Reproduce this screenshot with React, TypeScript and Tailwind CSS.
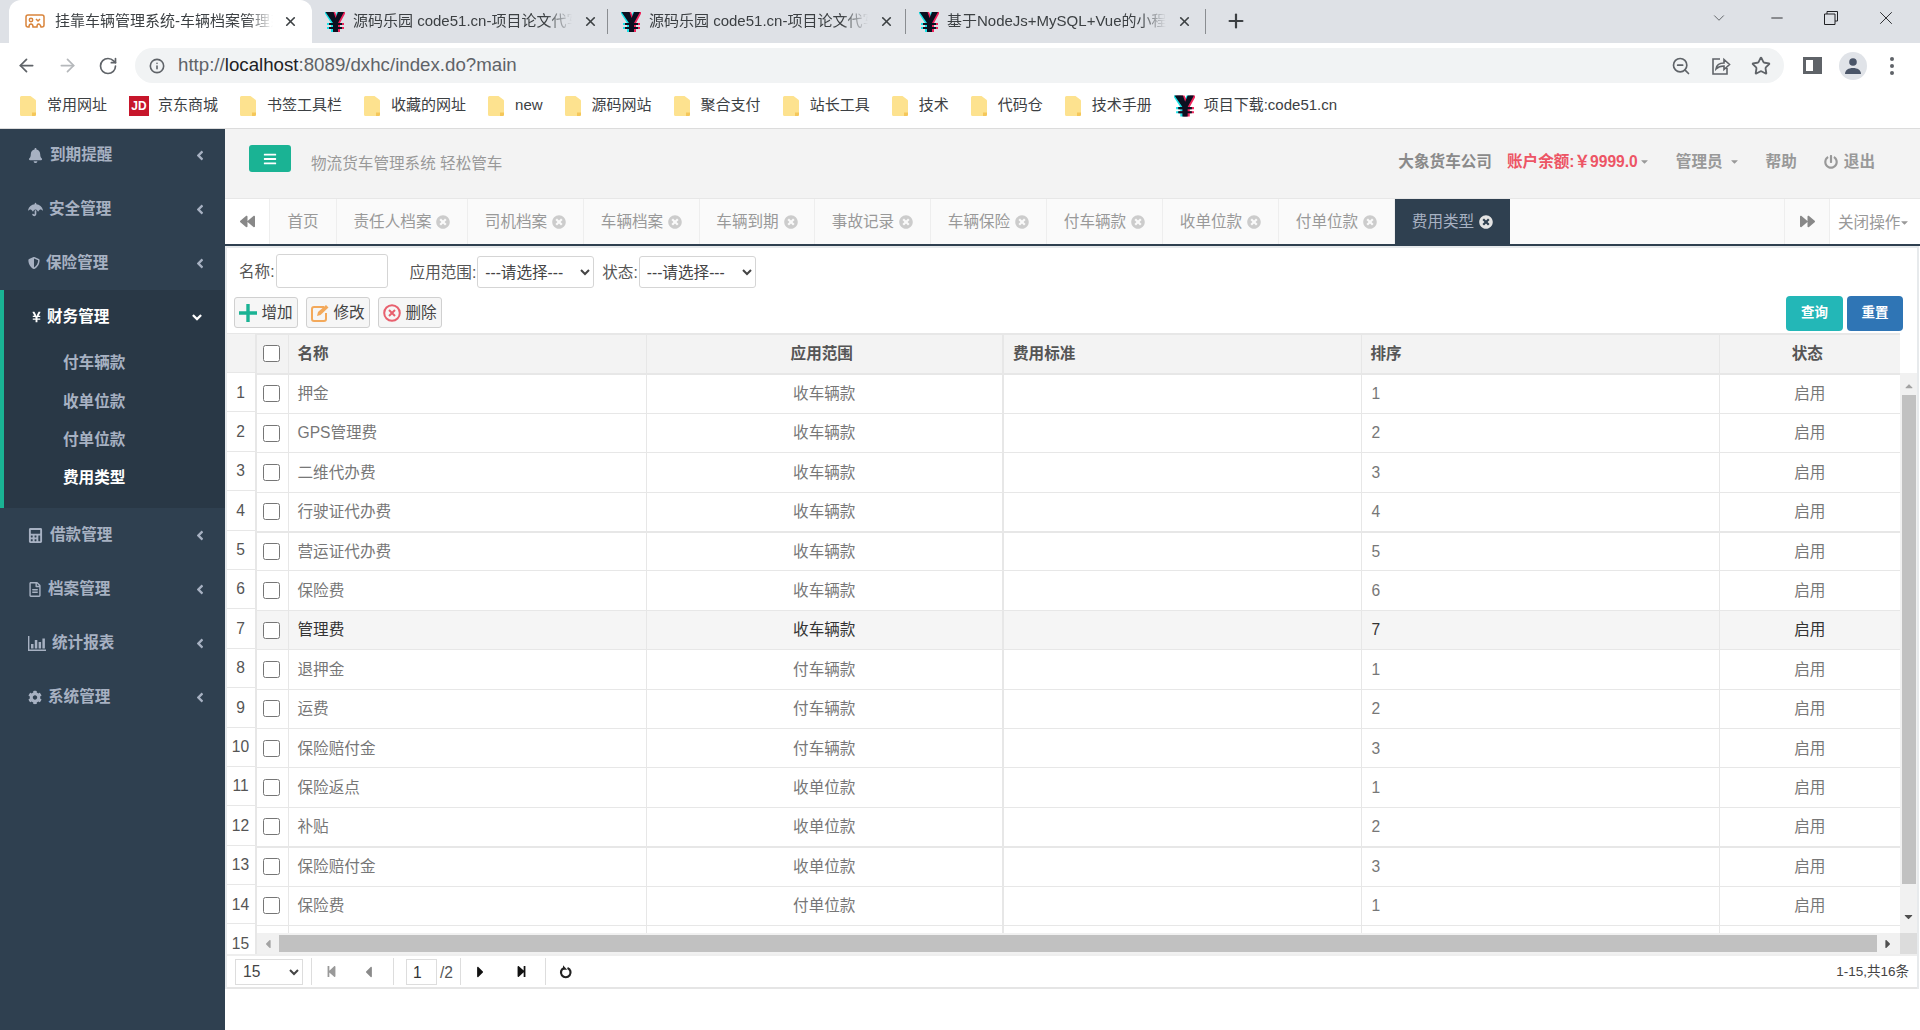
import { ReactNode } from "react";
import { ArrowLeft, ArrowRight, RotateCw, Info, ZoomOut, Star, X, Minus, Plus, ChevronDown } from "lucide-react";
import {
  FaAngleDown,
  FaAngleLeft,
  FaBackward,
  FaBars,
  FaBell,
  FaCalculator,
  FaCaretDown,
  FaCaretLeft,
  FaCaretRight,
  FaCaretUp,
  FaCog,
  FaForward,
  FaPowerOff,
  FaRegFileAlt,
  FaShieldAlt,
  FaStepBackward,
  FaStepForward,
  FaTimesCircle,
  FaUmbrella,
  FaYenSign,
} from "react-icons/fa";

function YIcon({ className }: { className?: string }) {
  return (
    <svg viewBox="0 0 20 22" className={className}>
      <path d="M0 1h8l2.6 6L13 1h6l-6 11h4v2h-4v2h4v2h-4v3H7v-3H3v-2h4v-2H3v-2h4z" fill="#19e3e8" transform="translate(-1 0)" />
      <path d="M1 1h8l2.6 6L14 1h6l-6 11h4v2h-4v2h4v2h-4v3H8v-3H4v-2h4v-2H4v-2h4z" fill="#f0245c" transform="translate(1 0)" />
      <path d="M0.5 1h8l2.1 6 2.4-6h6l-6 11h4v2h-4v2h4v2h-4v3h-5v-3h-4v-2h4v-2h-4v-2h4z" fill="#0b1020" />
    </svg>
  );
}

function ElephantIcon() {
  return (
    <svg viewBox="0 0 20 16" className="h-[16px] w-[20px] shrink-0" fill="none" stroke="#d9843b" strokeWidth="1.5">
      <path d="M3 1h14a2 2 0 0 1 2 2v8c0 1.500-1 2-2 2h-1c-.5-2-1.500-3-2.500-3s-1.500.7-1.500 3H8c0-2-.7-3-2-3s-2 1.500-2 3H3c-1.200 0-2-.7-2-2V3a2 2 0 0 1 2-2z" />
      <circle cx="6" cy="6" r="1.700" />
      <path d="M11 5l2 2 2-2" />
    </svg>
  );
}

function Folder() {
  return (
    <svg viewBox="0 0 16 20" className="h-[20px] w-[16px] shrink-0">
      <path d="M1.500 0h9l4 3c.8.500 1.500 1 1.500 2v13.500a1.500 1.500 0 0 1-1.500 1.500h-13A1.500 1.500 0 0 1 0 18.500v-17A1.500 1.500 0 0 1 1.500 0z" fill="#fde28f" />
      <path d="M12 20v-3.500h4V18.500a1.500 1.500 0 0 1-1.500 1.500z" fill="#f5c75a" />
    </svg>
  );
}

const tabs = [
  { title: "源码乐园 code51.cn-项目论文代写服务平台", width: "w-[296px]" },
  { title: "源码乐园 code51.cn-项目论文代写服务平台", width: "w-[298px]" },
  { title: "基于NodeJs+MySQL+Vue的小程序设计与实现", width: "w-[300px]" },
];

function BrowserChrome() {
  const bookmarks = ["常用网址", "JD:京东商城", "书签工具栏", "收藏的网址", "new", "源码网站", "聚合支付", "站长工具", "技术", "代码仓", "技术手册"];
  return (
    <div className="h-[129px] shrink-0 border-b border-[#dcdcdc] bg-white text-[15px] text-[#3c4043]">
      <div className="flex h-[43px] items-stretch bg-[#dee1e6] pl-[9px]">
        <div className="flex w-[303px] items-center rounded-t-[12px] bg-white pl-[16px]">
          <ElephantIcon />
          <span className="ml-[10px] w-[218px] overflow-hidden whitespace-nowrap [mask-image:linear-gradient(to_right,black_88%,transparent)]">
            挂靠车辆管理系统-车辆档案管理系统
          </span>
          <X className="ml-[10px] h-[15px] w-[15px] text-[#3c4043]" strokeWidth={2.6} />
        </div>
        {tabs.map((t, i) => (
          <div key={i} className={"flex items-center pl-[13px] " + t.width}>
            <YIcon className="h-[22px] w-[20px] shrink-0" />
            <span className="ml-[8px] w-[219px] overflow-hidden whitespace-nowrap [mask-image:linear-gradient(to_right,black_88%,transparent)]">
              {t.title}
            </span>
            <X className="ml-[11px] h-[15px] w-[15px] text-[#3c4043]" strokeWidth={2.6} />
            <div className="ml-auto h-[25px] w-px bg-[#8a8d91]" />
          </div>
        ))}
        <Plus className="ml-[19px] mt-[10px] h-[22px] w-[22px] text-[#3c4043]" strokeWidth={2.4} />
        <ChevronDown className="ml-[463px] mt-[9px] h-[18px] w-[18px] text-[#3c4043]" strokeWidth={1} />
        <Minus className="ml-[40px] mt-[9px] h-[18px] w-[18px] text-[#202124]" strokeWidth={1.2} />
        <svg viewBox="0 0 14 14" className="ml-[38px] mt-[11px] h-[14px] w-[14px]" fill="none" stroke="#202124" strokeWidth="1">
          <path d="M3 3V.5h10.500V10H11M.5 3h10.500v10.500H.5z" />
        </svg>
        <X className="ml-[37px] mt-[7px] h-[22px] w-[22px] text-[#202124]" strokeWidth={1} />
      </div>
      <div className="flex h-[40px] items-center pb-[-5px] pt-[5px]">
        <ArrowLeft className="ml-[16px] h-[21px] w-[21px] text-[#5f6368]" strokeWidth={2} />
        <ArrowRight className="ml-[20px] h-[21px] w-[21px] text-[#b5b8bb]" strokeWidth={2} />
        <RotateCw className="ml-[20px] h-[20px] w-[20px] text-[#5f6368]" strokeWidth={2} />
        <div className="ml-[17px] flex h-[35px] w-[1649px] items-center rounded-full bg-[#f1f3f4] pl-[14px]">
          <Info className="h-[16px] w-[16px] text-[#5f6368]" strokeWidth={2.4} />
          <span className="ml-[13px] text-[18.700px] leading-none text-[#5f6368]">
            http://<span className="text-[#202124]">localhost</span>:8089/dxhc/index.do?main
          </span>
          <ZoomOut className="ml-auto h-[20px] w-[20px] text-[#5f6368]" strokeWidth={2} />
          <svg viewBox="0 0 20 20" className="ml-[20px] h-[20px] w-[20px]" fill="none" stroke="#5f6368" strokeWidth="1.600">
            <path d="M9 3H2v15h14v-6M5 13c.5-4 4-6 8-6V3.500l5.500 5L13 13.500V10c-3 0-6 1-8 3z" />
          </svg>
          <Star className="ml-[20px] mr-[13px] h-[20px] w-[20px] text-[#5f6368]" strokeWidth={2.2} />
        </div>
        <div className="ml-[19px] flex h-[17px] w-[19px] items-center justify-end border-[3px] border-r-[9px] border-[#5f6368] bg-white" />
        <div className="ml-[17px] flex h-[28px] w-[28px] items-center justify-center rounded-full bg-[#e0e3e8]">
          <svg viewBox="0 0 18 18" className="h-[18px] w-[18px]" fill="#4a5568">
            <circle cx="9" cy="5" r="3.800" />
            <path d="M1 17c0-4 3.500-6 8-6s8 2 8 6z" />
          </svg>
        </div>
        <div className="ml-[23px] flex flex-col gap-[3px]">
          <div className="h-[4px] w-[4px] rounded-full bg-[#5f6368]" />
          <div className="h-[4px] w-[4px] rounded-full bg-[#5f6368]" />
          <div className="h-[4px] w-[4px] rounded-full bg-[#5f6368]" />
        </div>
      </div>
      <div className="flex h-[45px] items-center gap-[22px] pl-[20px]">
        {bookmarks.map((b) =>
          b.startsWith("JD:") ? (
            <div key={b} className="flex items-center gap-[9px]">
              <div className="flex h-[20px] w-[20px] items-center justify-center bg-[#c7162b] text-[12px] font-bold text-white">JD</div>
              <span>{b.slice(3)}</span>
            </div>
          ) : (
            <div key={b} className="flex items-center gap-[11px]">
              <Folder />
              <span>{b}</span>
            </div>
          )
        )}
        <div className="flex items-center gap-[9px]">
          <YIcon className="h-[24px] w-[21px] shrink-0" />
          <span>项目下载:code51.cn</span>
        </div>
      </div>
    </div>
  );
}

function BarChartIcon() {
  return (
    <svg viewBox="0 0 18 15" className="h-[15px] w-[18px]" fill="currentColor">
      <path d="M0 0h1.400v13.600H18V15H0z" />
      <path d="M3 8h2.500v4.500H3zM6.800 4h2.500v8.500H6.800zM10.600 6h2.500v6.500h-2.500zM14.400 2.500h2.500v10h-2.500z" />
    </svg>
  );
}

function SideItem({ icon, label, gap }: { icon: ReactNode; label: string; gap: string }) {
  return (
    <div className={"flex h-[54px] items-center pl-[28px] pr-[20px] font-semibold text-[#a7b1c2] " + gap}>
      {icon}
      <span>{label}</span>
      <FaAngleLeft className="ml-auto h-[15px] w-[10px]" />
    </div>
  );
}

function Sidebar() {
  return (
    <aside className="w-[225px] shrink-0 bg-[#2f4050] text-[15.600px]">
      <div className="-mt-px">
        <SideItem icon={<FaBell className="h-[15px] w-[15px]" />} label="到期提醒" gap="gap-[7px]" />
        <SideItem icon={<FaUmbrella className="h-[15px] w-[15px]" />} label="安全管理" gap="gap-[6px]" />
        <SideItem icon={<FaShieldAlt className="h-[14px] w-[12px]" />} label="保险管理" gap="gap-[6px]" />
      </div>
      <div className="h-[218px] border-l-4 border-[#1ab394] bg-[#293846]">
        <div className="flex h-[54px] items-center gap-[6px] pl-[28px] pr-[21px] font-semibold text-white">
          <FaYenSign className="h-[14px] w-[9px]" />
          <span>财务管理</span>
          <FaAngleDown className="ml-auto h-[15px] w-[14px]" />
        </div>
        <div className="flex flex-col pl-[59px] font-semibold text-[#a7b1c2]">
          <div className="flex h-[38.300px] items-center">付车辆款</div>
          <div className="flex h-[38.300px] items-center">收单位款</div>
          <div className="flex h-[38.300px] items-center">付单位款</div>
          <div className="flex h-[38.300px] items-center text-white">费用类型</div>
        </div>
      </div>
      <SideItem icon={<FaCalculator className="h-[15px] w-[15px]" />} label="借款管理" gap="gap-[7px]" />
      <SideItem icon={<FaRegFileAlt className="h-[15px] w-[14px]" />} label="档案管理" gap="gap-[6px]" />
      <SideItem icon={<BarChartIcon />} label="统计报表" gap="gap-[6px]" />
      <SideItem icon={<FaCog className="h-[15px] w-[14px]" />} label="系统管理" gap="gap-[6px]" />
    </aside>
  );
}

function TopBar() {
  return (
    <div className="flex h-[69px] items-start bg-[#f3f3f3] font-semibold text-[#999999]">
      <button className="ml-[24px] mt-[16px] flex h-[27px] w-[42px] items-center justify-center rounded-[3px] bg-[#1ab394] text-white">
        <FaBars className="h-[14px] w-[14px]" />
      </button>
      <span className="ml-[20px] mt-[23px] text-[15.600px] font-normal">物流货车管理系统 轻松管车</span>
      <div className="ml-auto mt-[21px] flex items-center pr-[47px] text-[15.600px]">
        <span className="text-[#8a8a8a]">大象货车公司</span>
        <span className="ml-[15px] text-[#ed5565]">账户余额:￥9999.0</span>
        <FaCaretDown className="ml-[2px] h-[11px] w-[9px]" />
        <span className="ml-[27px]">管理员</span>
        <FaCaretDown className="ml-[7px] h-[11px] w-[9px]" />
        <span className="ml-[27px]">帮助</span>
        <FaPowerOff className="ml-[27px] h-[14px] w-[14px]" />
        <span className="ml-[6px]">退出</span>
      </div>
    </div>
  );
}

const openTabs = [
  { label: "责任人档案", width: "w-[131px]" },
  { label: "司机档案", width: "w-[116px]" },
  { label: "车辆档案", width: "w-[116px]" },
  { label: "车辆到期", width: "w-[115px]" },
  { label: "事故记录", width: "w-[116px]" },
  { label: "车辆保险", width: "w-[116px]" },
  { label: "付车辆款", width: "w-[116px]" },
  { label: "收单位款", width: "w-[116px]" },
  { label: "付单位款", width: "w-[116px]" },
];

function TabBar() {
  return (
    <div className="flex h-[48px] border-t border-[#e7e7e7] border-b-2 border-b-[#2f4050] bg-[#fafafa] text-[15.600px] text-[#999999]">
      <div className="flex w-[45px] items-center justify-center border-r border-[#eeeeee] bg-white">
        <FaBackward className="h-[15px] w-[15px] text-[#888888]" />
      </div>
      <div className="flex w-[67px] items-center justify-center border-r border-[#eeeeee]">首页</div>
      {openTabs.map((t) => (
        <div key={t.label} className={"flex items-center justify-center gap-[5px] border-r border-[#eeeeee] " + t.width}>
          <span>{t.label}</span>
          <FaTimesCircle className="h-[14px] w-[14px] text-[#cccccc]" />
        </div>
      ))}
      <div className="flex w-[115px] items-center justify-center gap-[5px] bg-[#2f4050] text-[#a7b1c2]">
        <span>费用类型</span>
        <FaTimesCircle className="h-[14px] w-[14px] text-[#e4e4e4]" />
      </div>
      <div className="flex-1" />
      <div className="flex w-[45px] items-center justify-center border-l border-[#eeeeee]">
        <FaForward className="h-[15px] w-[15px] text-[#888888]" />
      </div>
      <div className="flex w-[90px] items-center border-l border-[#eeeeee] bg-white pl-[8px] pt-[2px]">
        <span>关闭操作</span>
        <FaCaretDown className="h-[11px] w-[9px]" />
      </div>
      <div className="w-[3px] bg-white" />
    </div>
  );
}

function FilterSelect() {
  return (
    <select className="h-[32px] w-[117px] rounded-[3px] border border-[#d5d5d5] bg-white pl-[3px] text-[15.600px] text-[#444444]">
      <option>---请选择---</option>
    </select>
  );
}

function ToolButton({ icon, label }: { icon: ReactNode; label: string }) {
  return (
    <button className="flex h-[31px] w-[64px] items-center justify-center gap-[4px] rounded-[3px] border border-[#d0d0d0] bg-[#f6f6f6] text-[15.600px] text-[#444444]">
      {icon}
      <span>{label}</span>
    </button>
  );
}

function Filters() {
  return (
    <div className="h-[85px] text-[#555555]">
      <div className="flex items-end pl-[12px] pt-[6px] text-[15.600px]">
        <span className="pb-[5px]">名称:</span>
        <input className="ml-[1px] h-[34px] w-[112px] rounded-[3px] border border-[#d5d5d5] bg-white" />
        <span className="ml-[22px] pb-[4px]">应用范围:</span>
        <div className="ml-[1px]">
          <FilterSelect />
        </div>
        <span className="ml-[8px] pb-[4px]">状态:</span>
        <div className="ml-[1px]">
          <FilterSelect />
        </div>
      </div>
      <div className="flex items-start pl-[7px] pr-[14px] pt-[9px]">
        <div className="flex gap-[8px]">
          <ToolButton
            label="增加"
            icon={
              <svg viewBox="0 0 18 18" className="h-[18px] w-[18px]" fill="#1ab394">
                <path d="M7.300 0h3.400v7.300H18v3.400h-7.300V18H7.300v-7.300H0V7.300h7.300z" />
              </svg>
            }
          />
          <ToolButton
            label="修改"
            icon={
              <svg viewBox="0 0 18 18" className="h-[18px] w-[18px]" fill="none" stroke="#f3a95b" strokeWidth="2">
                <path d="M13 3H3a2 2 0 0 0-2 2v10a2 2 0 0 0 2 2h10a2 2 0 0 0 2-2V9" />
                <path d="M6 12l1-4 8-7 2.500 2.500-8 7.500z" fill="#f3a95b" stroke="none" />
              </svg>
            }
          />
          <ToolButton
            label="删除"
            icon={
              <svg viewBox="0 0 18 18" className="h-[18px] w-[18px]" fill="none" stroke="#e8606e" strokeWidth="2">
                <circle cx="9" cy="9" r="7.800" />
                <path d="M6 6l6 6M12 6l-6 6" />
              </svg>
            }
          />
        </div>
        <div className="ml-auto -mt-[1px] flex gap-[4px]">
          <button className="h-[35px] w-[57px] rounded-[4px] bg-[#23b7b7] text-[13.500px] font-bold text-white">查询</button>
          <button className="h-[35px] w-[56px] rounded-[4px] bg-[#2f75b5] text-[13.500px] font-bold text-white">重置</button>
        </div>
      </div>
    </div>
  );
}

const rows = [
  ["押金", "收车辆款", "1"],
  ["GPS管理费", "收车辆款", "2"],
  ["二维代办费", "收车辆款", "3"],
  ["行驶证代办费", "收车辆款", "4"],
  ["营运证代办费", "收车辆款", "5"],
  ["保险费", "收车辆款", "6"],
  ["管理费", "收车辆款", "7"],
  ["退押金", "付车辆款", "1"],
  ["运费", "付车辆款", "2"],
  ["保险赔付金", "付车辆款", "3"],
  ["保险返点", "收单位款", "1"],
  ["补贴", "收单位款", "2"],
  ["保险赔付金", "收单位款", "3"],
  ["保险费", "付单位款", "1"],
  ["", "", ""],
];

function Grid() {
  return (
    <div className="flex h-[621px]">
      <div className="h-full w-[30px] shrink-0 overflow-hidden border-r-2 border-[#e7e7e7] text-[15.600px] text-[#555555]">
        <div className="h-[40px] border-y border-[#e7e7e7] bg-[#f3f3f3]" />
        {rows.map((_, i) => (
          <div key={i} className="flex h-[39.400px] items-center justify-center border-b border-[#e7e7e7] pr-[1px]">
            {i + 1}
          </div>
        ))}
      </div>
      <div className="flex w-[1660px] flex-col">
        <div className="flex h-[600px]">
          <div className="h-full w-[1643px] overflow-hidden">
            <table className="w-[1643px] table-fixed border-collapse text-[15.600px] text-[#777777]">
              <colgroup>
                <col className="w-[31px]" />
                <col className="w-[358px]" />
                <col className="w-[357px]" />
                <col className="w-[358px]" />
                <col className="w-[358px]" />
                <col className="w-[181px]" />
              </colgroup>
              <thead>
                <tr className="h-[40px] border-y-2 border-t-[#e7e7e7] border-b-[#e7e7e7] bg-[#f3f3f3] font-bold text-[#555555]">
                  <th className="border-r border-[#e7e7e7] font-normal">
                    <input type="checkbox" className="block h-[17px] w-[17px] translate-x-[6px] -translate-y-[1px]" />
                  </th>
                  <th className="border-r border-[#e7e7e7] pl-[9px] text-left">名称</th>
                  <th className="border-r-2 border-[#e7e7e7] pr-[5px] text-center">应用范围</th>
                  <th className="border-r border-[#e7e7e7] pl-[9px] text-left">费用标准</th>
                  <th className="border-r border-[#e7e7e7] pl-[9px] text-left">排序</th>
                  <th className="pr-[5px] text-center">状态</th>
                </tr>
              </thead>
              <tbody>
                {rows.map((r, i) => (
                  <tr
                    key={i}
                    className={
                      "h-[39.400px] border-b border-[#e7e7e7] " +
                      (i === 6 ? "bg-[#f5f5f5] text-[#333333] " : "") +
                      (i === 3 || i === 11 ? "border-b-2" : "")
                    }
                  >
                    <td className="border-r border-[#e7e7e7]">
                      {i < 14 && <input type="checkbox" className="block h-[17px] w-[17px] translate-x-[6px]" />}
                    </td>
                    <td className="border-r border-[#e7e7e7] pl-[9px]">{r[0]}</td>
                    <td className="border-r-2 border-[#e7e7e7] text-center">{r[1]}</td>
                    <td className="border-r border-[#e7e7e7]" />
                    <td className="border-r border-[#e7e7e7] pl-[10px]">{r[2]}</td>
                    <td className="text-center">{i < 14 && "启用"}</td>
                  </tr>
                ))}
              </tbody>
            </table>
          </div>
          <div className="flex w-[17px] flex-col">
            <div className="h-[40px] bg-white" />
            <div className="flex flex-1 flex-col items-center bg-[#f1f1f1]">
              <FaCaretUp className="mt-[7px] h-[12px] w-[12px] text-[#a3a3a3]" />
              <div className="mt-[3px] h-[489px] w-[14px] bg-[#c1c1c1]" />
              <FaCaretDown className="mt-[26px] h-[13px] w-[13px] text-[#505050]" />
            </div>
          </div>
        </div>
        <div className="flex h-[21px] items-center bg-[#f1f1f1]">
          <FaCaretLeft className="ml-[6px] h-[14px] w-[10px] text-[#a3a3a3]" />
          <div className="ml-[6px] h-[17px] w-[1598px] bg-[#c1c1c1]" />
          <FaCaretRight className="ml-[6px] h-[14px] w-[10px] text-[#505050]" />
          <div className="ml-auto h-full w-[17px] bg-[#dcdcdc]" />
        </div>
      </div>
    </div>
  );
}

function Pager() {
  const sep = "h-[27px] w-px bg-[#dddddd]";
  return (
    <div className="flex h-[35px] items-center border-y-2 border-t-[#eeeeee] border-b-[#e5e5e5] pl-[8px] pr-[8px] text-[15.600px] text-[#555555]">
      <select className="h-[26px] w-[68px] border border-[#dddddd] bg-white pl-[3px] text-[#444444]">
        <option>15</option>
      </select>
      <div className={"ml-[8px] " + sep} />
      <FaStepBackward className="ml-[14px] h-[13px] w-[11px] text-[#999999]" />
      <FaCaretLeft className="ml-[26px] h-[18px] w-[11px] text-[#8a8a8a]" />
      <div className={"ml-[19px] " + sep} />
      <div className="ml-[12px] flex h-[26px] w-[31px] items-center border border-[#dddddd] pl-[6px] pt-[3px] text-[#333333]">1</div>
      <span className="ml-[3px] pt-[2px]">/2</span>
      <div className={"ml-[7px] " + sep} />
      <FaCaretRight className="ml-[14px] h-[18px] w-[11px] text-[#111111]" />
      <FaStepForward className="ml-[30px] h-[13px] w-[11px] text-[#111111]" />
      <div className={"ml-[18px] " + sep} />
      <svg viewBox="0 0 14 14" className="ml-[13px] h-[14px] w-[14px]" fill="none" stroke="#222222" strokeWidth="2.200">
        <path d="M8.500 3a4.800 4.800 0 1 1-3.500 0" />
        <path d="M4 0.200v4.600h4.200z" fill="#222222" stroke="none" />
      </svg>
      <span className="ml-auto pt-[1px] text-[13.500px] text-[#444444]">1-15,共16条</span>
    </div>
  );
}

export default function App() {
  return (
    <div className="flex h-[1030px] w-[1920px] flex-col overflow-hidden bg-white font-['Liberation_Sans','Noto_Sans_CJK_SC',sans-serif]">
      <BrowserChrome />
      <div className="flex min-h-0 flex-1">
        <Sidebar />
        <main className="flex-1">
          <TopBar />
          <TabBar />
          <div className="mr-[3px] ml-0 border-x-2 border-t-2 border-[#e7eaec] bg-white">
            <Filters />
            <Grid />
            <Pager />
          </div>
        </main>
      </div>
    </div>
  );
}
